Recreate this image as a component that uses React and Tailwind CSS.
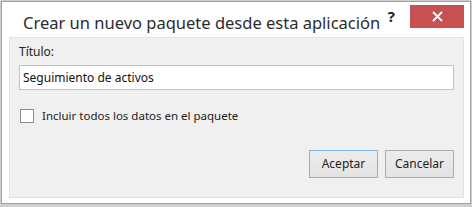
import React, { useState } from 'react';

const font = { fontFamily: '"Noto Sans", "Open Sans", sans-serif' };

const App = () => {
  const [title, setTitle] = useState('Seguimiento de activos');
  const [includeAll, setIncludeAll] = useState(false);

  return (
    <div className="w-[472px] h-[207px] bg-[#cfcfcf] overflow-hidden" style={font}>
      <div className="ml-[1px] mt-[1px] w-[470px] h-[203px] border border-[#a0a0a0] bg-white flex flex-col">
        {/* Title bar */}
        <div className="h-[35px] flex items-start shrink-0">
          <div className="pl-[21px] pt-[9px] text-[16.5px] leading-[24px] text-[#2b2b2b] flex-1">
            Crear un nuevo paquete desde esta aplicación
          </div>
          <div className="pt-[5px] pr-[15px] text-[15px] font-bold leading-[18px] text-[#222]">?</div>
          <button className="mt-[3px] mr-[6px] w-[54px] h-[23px] bg-[#c75050] flex items-center justify-center">
            <svg width="11" height="11" viewBox="0 0 11 11">
              <path d="M1 1 L10 10 M10 1 L1 10" stroke="#fff" strokeWidth="1.8" />
            </svg>
          </button>
        </div>

        {/* Body panel */}
        <div className="ml-[7px] mr-[6px] mb-[5px] flex-1 bg-[#f0f0f0] border border-[#e2e2e2] flex flex-col pl-[9px] pr-[9px]">
          <label className="mt-[5px] text-[12px] leading-[18px] text-[#222]">Título:</label>
          <input
            value={title}
            onChange={(e) => setTitle(e.target.value)}
            className="mt-[4px] h-[25px] w-full border border-[#c2c2c2] bg-white px-[3px] text-[12px] text-[#111] outline-none"
            style={font}
          />

          <label className="mt-[17px] flex items-center gap-[8px] cursor-pointer">
            <span
              onClick={() => setIncludeAll(!includeAll)}
              className="ml-[1px] w-[14px] h-[14px] border border-[#8c8c8c] bg-white flex items-center justify-center"
            >
              {includeAll && (
                <svg width="10" height="10" viewBox="0 0 10 10">
                  <path d="M1 5 L4 8 L9 2" stroke="#333" strokeWidth="1.5" fill="none" />
                </svg>
              )}
            </span>
            <span className="text-[11.5px] leading-[18px] text-[#222]">Incluir todos los datos en el paquete</span>
          </label>

          <div className="mt-auto mb-[19px] flex justify-end gap-[7px]">
            <button className="w-[69px] h-[28px] border border-[#7eb4ea] bg-gradient-to-b from-[#ececec] to-[#e3e3e3] text-[12px] text-[#222]">
              Aceptar
            </button>
            <button className="w-[69px] h-[28px] border border-[#adadad] bg-gradient-to-b from-[#ececec] to-[#e3e3e3] text-[12px] text-[#222]">
              Cancelar
            </button>
          </div>
        </div>
      </div>
    </div>
  );
};

export default App;
